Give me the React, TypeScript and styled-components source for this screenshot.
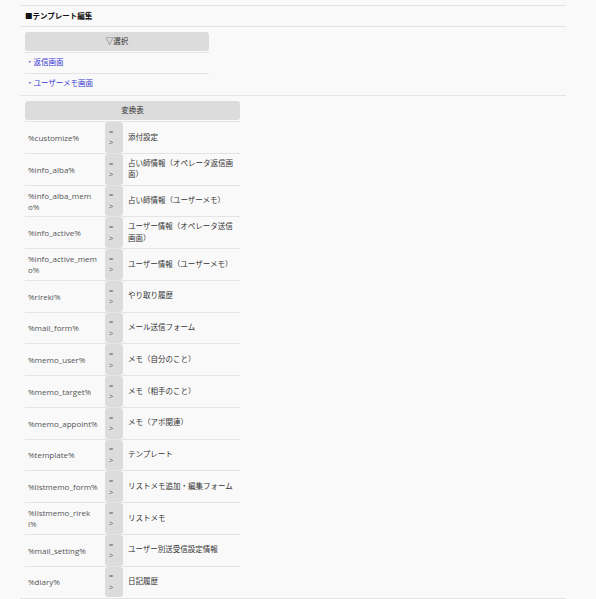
import React from 'react'
import styled, {createGlobalStyle} from 'styled-components'

type RowT = {
	key: string
	label: string
}

const rows: RowT[] = [
	{key: '%customize%', label: '添付設定'},
	{key: '%info_alba%', label: '占い師情報（オペレータ返信画面）'},
	{key: '%info_alba_memo%', label: '占い師情報（ユーザーメモ）'},
	{key: '%info_active%', label: 'ユーザー情報（オペレータ送信画面）'},
	{key: '%info_active_memo%', label: 'ユーザー情報（ユーザーメモ）'},
	{key: '%rireki%', label: 'やり取り履歴'},
	{key: '%mail_form%', label: 'メール送信フォーム'},
	{key: '%memo_user%', label: 'メモ（自分のこと）'},
	{key: '%memo_target%', label: 'メモ（相手のこと）'},
	{key: '%memo_appoint%', label: 'メモ（アポ関連）'},
	{key: '%template%', label: 'テンプレート'},
	{key: '%listmemo_form%', label: 'リストメモ追加・編集フォーム'},
	{key: '%listmemo_rireki%', label: 'リストメモ'},
	{key: '%mail_setting%', label: 'ユーザー別送受信設定情報'},
	{key: '%diary%', label: '日記履歴'},
]

const links = ['・返信画面', '・ユーザーメモ画面']

export default function App() {
	return (
		<>
			<GlobalStyle />
			<Page>
				<Title>■テンプレート編集</Title>

				<Block>
					<SelectBox>
						<BarHeader>▽選択</BarHeader>
						{links.map((l, idx) => (
							<LinkRow key={idx}>
								<a href='#'>{l}</a>
							</LinkRow>
						))}
					</SelectBox>
				</Block>

				<Block>
					<Table>
						<BarHeader>変換表</BarHeader>
						{rows.map(r => (
							<Row key={r.key}>
								<KeyCell>{r.key}</KeyCell>
								<ArrowCell>
									<ArrowText>=&gt;</ArrowText>
								</ArrowCell>
								<ValueCell>{r.label}</ValueCell>
							</Row>
						))}
					</Table>
				</Block>
			</Page>
		</>
	)
}

const GlobalStyle = createGlobalStyle`
	html, body {
		margin: 0;
		padding: 0;
		background: #f9f9f9;
	}
	body {
		font-family: "Open Sans", "Noto Sans CJK JP", sans-serif;
		font-size: 7.5px;
		line-height: 1.5;
		color: #333;
	}
`

const Page = styled.div`
	width: 546px;
	margin-left: 20px;
	padding-top: 5px;
`

const Title = styled.h2`
	margin: 0;
	height: 20px;
	line-height: 20px;
	padding-left: 5px;
	font-size: 7.5px;
	font-weight: bold;
	color: #111;
	border-top: 1px solid #e4e4e4;
	border-bottom: 1px solid #e4e4e4;
`

const Block = styled.div`
	padding: 5px 0 1px 5px;
	border-bottom: 1px solid #e4e4e4;
`

const SelectBox = styled.div`
	width: 184px;
`

const Table = styled.div`
	width: 215px;
`

const BarHeader = styled.div`
	height: 19px;
	line-height: 19px;
	margin-bottom: 1px;
	text-align: center;
	background: #dcdcdc;
	border-radius: 3px;
	color: #333;
`

const LinkRow = styled.div`
	height: 20px;
	display: flex;
	align-items: center;
	padding-left: 1px;
	border-top: 1px solid #e4e4e4;

	a {
		color: #3838d0;
		text-decoration: none;
	}
`

const Row = styled.div`
	display: grid;
	grid-template-columns: 80px 18px 117px;
	min-height: 30.75px;
	border-top: 1px solid #e4e4e4;
`

const KeyCell = styled.div`
	display: flex;
	align-items: center;
	padding: 0 6.5px 0 3px;
	font-size: 8px;
	line-height: 11px;
	color: #555;
	word-break: break-all;
`

const ArrowCell = styled.div`
	display: flex;
	align-items: center;
	padding: 0 4px;
	background: #dcdcdc;
	border-radius: 3px;
	color: #555;
`

const ArrowText = styled.span`
	display: block;
	width: 5px;
	word-break: break-all;
	line-height: 11.5px;
`

const ValueCell = styled.div`
	display: flex;
	align-items: center;
	padding: 0 4px 0 5px;
	line-height: 11.5px;
	color: #333;
`
